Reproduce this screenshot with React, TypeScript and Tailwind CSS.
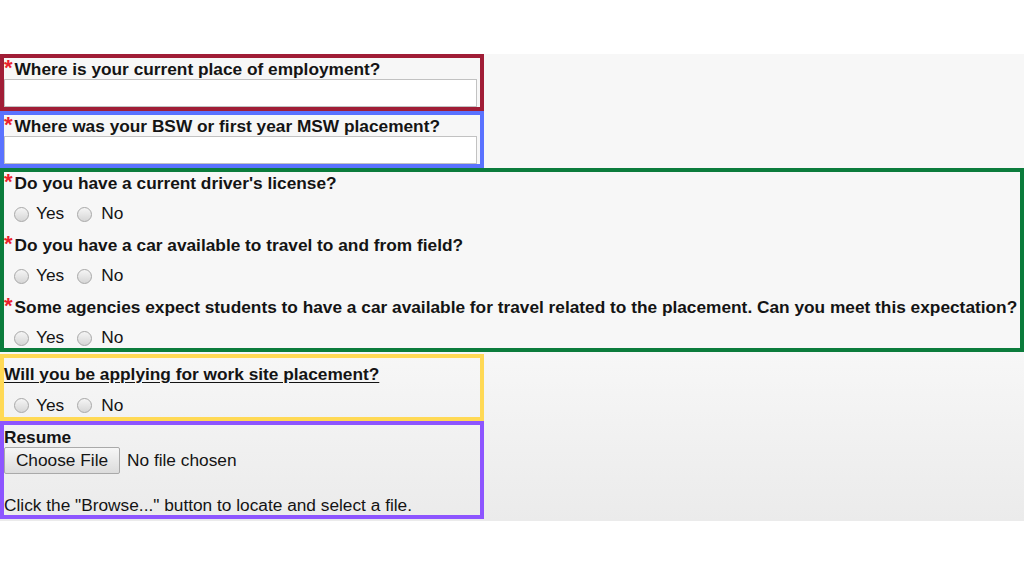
import React from 'react';

const Radio = ({ className = '' }: { className?: string }) => (
    <span
        className={
            'inline-block w-[15px] h-[15px] rounded-full border border-[#a8a8a8] bg-linear-to-b from-[#f5f5f5] to-[#d6d6d6] ' +
            className
        }
    />
);

function YesNo({ rowClass }: { rowClass: string }) {
    return (
        <div className={'flex items-center pl-[10px] text-[17.3px] ' + rowClass}>
            <Radio />
            <span className="ml-[7px]">Yes</span>
            <Radio className="ml-[13px]" />
            <span className="ml-[9px]">No</span>
        </div>
    );
}

function Label({ text }: { text: string }) {
    return (
        <div className="h-[20px] leading-[20px] whitespace-nowrap">
            <span className="text-[22px] font-bold leading-[20px] text-[#ec1f2d]">*</span>
            <span className="ml-[2px] text-[17.3px] font-bold">{text}</span>
        </div>
    );
}

function TextQuestion({ text, border }: { text: string; border: string }) {
    return (
        <section className={'w-[484px] h-[57px] border-4 ' + border}>
            <Label text={text} />
            <input
                type="text"
                className="mt-[1px] block w-[473px] h-[28px] border border-[#c2c2c2] bg-white outline-none"
            />
        </section>
    );
}

function RadioQuestion({ text }: { text: string }) {
    return (
        <div className="mb-[6px]">
            <Label text={text} />
            <YesNo rowClass="h-[36px] pt-[8px]" />
        </div>
    );
}

export default function App() {
    return (
        <div className="min-h-[576px] bg-white text-[#141414] font-['Liberation_Sans',Arial,sans-serif]">
            <div className="h-[54px]" />
            <div className="bg-[#f7f7f7]">
                <TextQuestion text="Where is your current place of employment?" border="border-[#a01d36]" />
                <TextQuestion text="Where was your BSW or first year MSW placement?" border="border-[#5a72ff]" />

                <section className="w-full h-[184px] border-4 border-[#0b7c3c] overflow-hidden">
                    <RadioQuestion text="Do you have a current driver's license?" />
                    <RadioQuestion text="Do you have a car available to travel to and from field?" />
                    <RadioQuestion text="Some agencies expect students to have a car available for travel related to the placement. Can you meet this expectation?" />
                </section>

                <div className="pt-[2px] pb-[2px] bg-linear-to-b from-[#f7f7f7] to-[#ebebeb]">
                    <section className="w-[484px] h-[67px] border-4 border-[#ffd955]">
                        <div className="pt-[6px] h-[26px] leading-[20px] text-[17.3px] font-bold underline underline-offset-2 whitespace-nowrap">
                            Will you be applying for work site placement?
                        </div>
                        <YesNo rowClass="h-[33px] pt-[10px]" />
                    </section>

                    <section className="w-[484px] h-[98px] border-4 border-[#8d55ff] text-[17.3px]">
                        <div className="pt-[3px] h-[22px] leading-[19px] font-bold">Resume</div>
                        <div className="flex items-center h-[27px]">
                            <button className="w-[116px] h-[27px] border border-[#a9a9a9] rounded-[2px] bg-linear-to-b from-[#f6f6f6] to-[#dcdcdc] text-[17.3px] leading-none">
                                Choose File
                            </button>
                            <span className="ml-[7px]">No file chosen</span>
                        </div>
                        <div className="mt-[22px] leading-[18px] whitespace-nowrap">
                            Click the "Browse..." button to locate and select a file.
                        </div>
                    </section>
                </div>
            </div>
        </div>
    );
}
